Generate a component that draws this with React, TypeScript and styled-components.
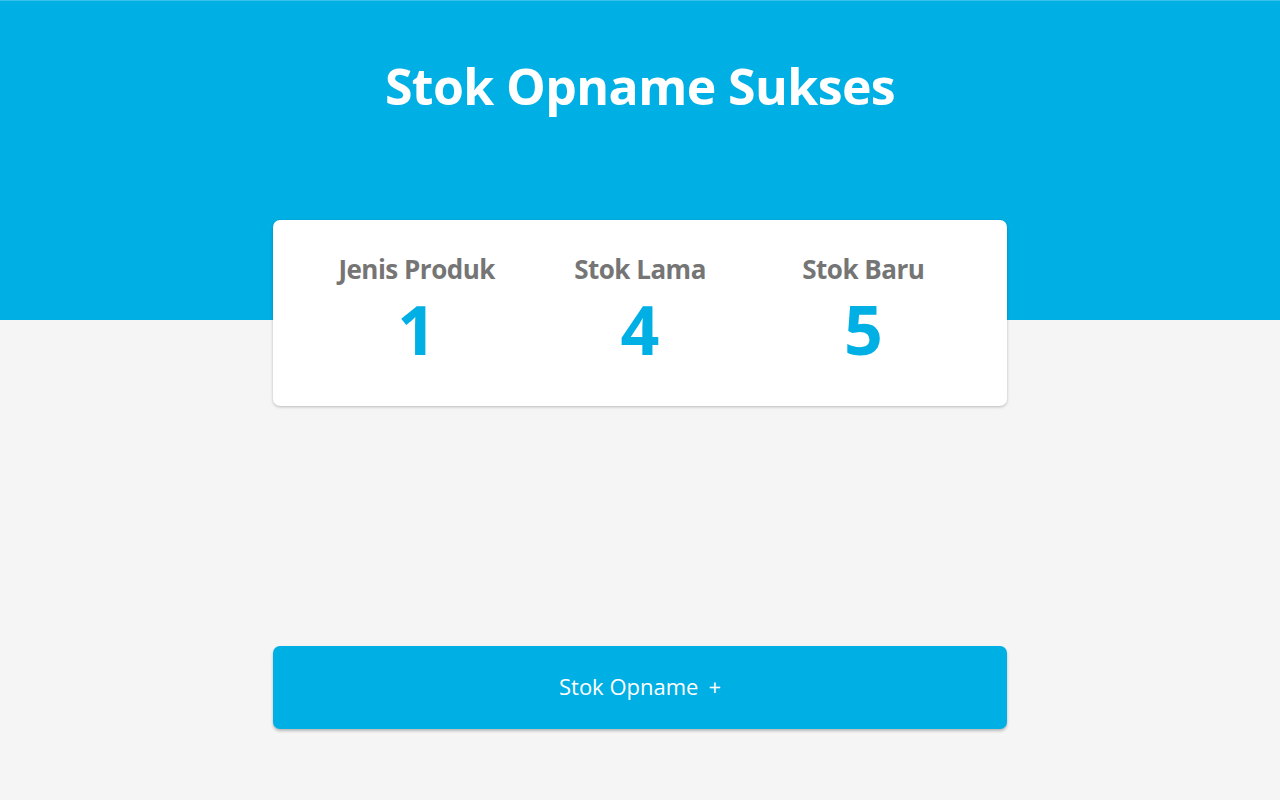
import React from "react";
import styled, { createGlobalStyle } from "styled-components";

const GlobalStyle = createGlobalStyle`
  body {
    margin: 0;
    background: #f5f5f5;
    font-family: "Open Sans", "Liberation Sans", sans-serif;
  }
`;

const stats = [
    { label: "Jenis Produk", value: 1 },
    { label: "Stok Lama", value: 4 },
    { label: "Stok Baru", value: 5 },
];

export default function App() {
    return (
        <>
            <GlobalStyle />
            <Page>
                <Header>
                    <Title>Stok Opname Sukses</Title>
                </Header>

                <Content>
                    <SummaryCard>
                        {stats.map((s) => (
                            <Stat key={s.label}>
                                <StatLabel>{s.label}</StatLabel>
                                <StatValue>{s.value}</StatValue>
                            </Stat>
                        ))}
                    </SummaryCard>

                    <ActionButton>
                        Stok Opname <Plus>+</Plus>
                    </ActionButton>
                </Content>
            </Page>
        </>
    );
}

const Page = styled.div`
  min-height: 800px;
  background: #f5f5f5;
`;

const Header = styled.header`
  height: 320px;
  box-sizing: border-box;
  background: #00afe4;
  border-top: 1px solid #3cc0ea;
  display: flex;
  justify-content: center;
  padding-top: 50px;
`;

const Title = styled.h1`
  margin: 0;
  color: #ffffff;
  font-size: 50px;
  font-weight: 700;
  letter-spacing: -0.6px;
  line-height: 70px;
`;

const Content = styled.main`
  width: 734px;
  margin: -100px auto 0;
  display: flex;
  flex-direction: column;
`;

const SummaryCard = styled.section`
  background: #ffffff;
  border-radius: 7px;
  box-shadow: 0 1px 3px rgba(0, 0, 0, 0.25);
  height: 186px;
  box-sizing: border-box;
  padding: 29px 32px 0;
  display: grid;
  grid-template-columns: repeat(3, 1fr);
  align-items: start;
`;

const Stat = styled.div`
  display: flex;
  flex-direction: column;
  align-items: center;
`;

const StatLabel = styled.span`
  color: #757575;
  font-size: 26px;
  font-weight: 700;
  letter-spacing: -0.5px;
  line-height: 40px;
`;

const StatValue = styled.span`
  color: #00afe4;
  font-size: 68px;
  font-weight: 700;
  line-height: 80px;
`;

const ActionButton = styled.button`
  margin-top: 240px;
  height: 83px;
  padding: 0 0 4px;
  border: none;
  border-radius: 7px;
  background: #00afe4;
  box-shadow: 0 2px 3px rgba(0, 0, 0, 0.25);
  color: #ffffff;
  font-family: inherit;
  font-size: 22px;
  cursor: pointer;
  display: flex;
  align-items: center;
  justify-content: center;
  gap: 10px;
`;

const Plus = styled.span`
  font-size: 22px;
`;
